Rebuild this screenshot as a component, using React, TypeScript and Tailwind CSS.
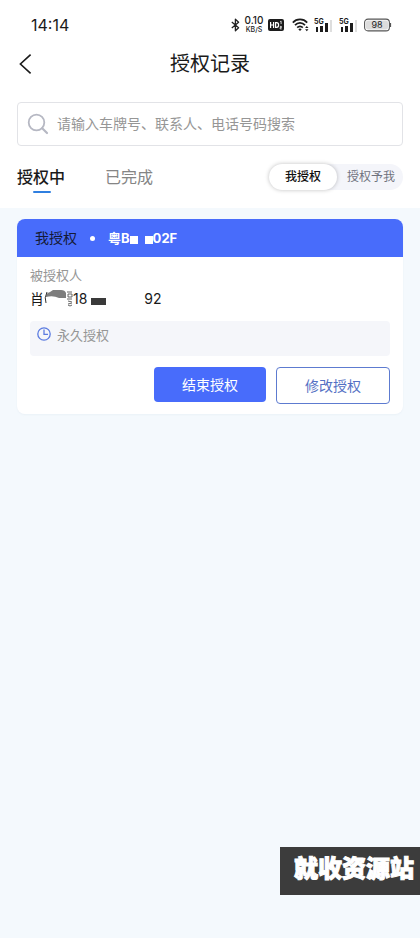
import React, { useState } from 'react';

const BluetoothIcon = () => (
  <svg width="9" height="14" viewBox="0 0 9 14" fill="none" stroke="#222" strokeWidth="1.3" strokeLinejoin="round">
    <path d="M0.8 4 L7.6 9.8 L4.4 12.8 V1.2 L7.6 4.2 L0.8 10" />
  </svg>
);

const HdIcon = () => (
  <svg width="16" height="12" viewBox="0 0 16 12">
    <rect width="16" height="12" rx="2" fill="#1c1c1c" />
    <path d="M2.6 3v6M5.6 3v6M2.6 6h3M7.6 3.6v4.8h1c1.4 0 2-1 2-2.4s-.6-2.4-2-2.4z" fill="none" stroke="#fff" strokeWidth="1.2" />
    <path d="M12.2 2.6l.9-.5v3M11.9 7.4h1.5v1.2h-1.3v1.3h1.6" fill="none" stroke="#fff" strokeWidth="0.8" />
  </svg>
);

const WifiIcon = () => (
  <svg width="18" height="14" viewBox="0 0 18 14" fill="none" stroke="#1c1c1c" strokeWidth="1.7">
    <path d="M0.8 4.6 C4.6 0.4 11.4 0.4 15.2 4.6" />
    <path d="M3 7.2 C5.8 4.2 10.2 4.2 13 7.2" />
    <path d="M5.2 9.6 C6.8 7.9 9.2 7.9 10.8 9.6" />
    <path d="M8 13 L6.3 11.2 Q8 9.8 9.7 11.2 Z" fill="#1c1c1c" stroke="none" />
    <path d="M14.8 8 l1.7 2 h-3.4z M14.8 13.2 l1.7 -2 h-3.4z" fill="#1c1c1c" stroke="none" />
  </svg>
);

const SignalIcon = () => (
  <svg width="19" height="15" viewBox="0 0 19 15">
    <text x="0" y="6" fontSize="7" fontWeight="700" fontFamily="Inter, sans-serif" fill="#1c1c1c">5G</text>
    <rect x="2" y="9" width="2" height="5" fill="#1c1c1c" />
    <rect x="6" y="8" width="3" height="6" fill="#1c1c1c" />
    <rect x="11" y="5" width="3" height="9" fill="#1c1c1c" />
    <rect x="16" y="2" width="2" height="12" fill="#dedede" />
  </svg>
);

const BatteryIcon = () => (
  <svg width="28" height="14" viewBox="0 0 28 14">
    <rect x="0.6" y="1.1" width="24.8" height="11.8" rx="3.4" fill="#fff" stroke="#555" strokeWidth="1.1" />
    <rect x="2" y="2.5" width="22" height="9" rx="2" fill="#dcdcdc" />
    <path d="M26.4 5 v4" stroke="#555" strokeWidth="1.4" />
    <text x="13" y="10.4" textAnchor="middle" fontSize="9" fontFamily="Inter, sans-serif" fill="#222">98</text>
  </svg>
);

const StatusBar = () => (
  <div className="flex h-[46px] items-center pl-[31px] pr-7 pt-1">
    <span className="mr-auto text-base leading-5">14:14</span>
    <div className="flex items-center">
      <BluetoothIcon />
      <div className="ml-1 flex w-5 flex-col items-center text-[#222]">
        <span className="text-[10px] font-medium leading-[9px]">0.10</span>
        <span className="text-[7px] font-medium leading-[9px]">KB/S</span>
      </div>
      <div className="ml-1 flex items-center">
        <HdIcon />
      </div>
      <div className="ml-2 flex items-center gap-1">
        <WifiIcon />
        <div className="flex gap-1.5 pr-0.5">
          <SignalIcon />
          <SignalIcon />
        </div>
        <BatteryIcon />
      </div>
    </div>
  </div>
);

const App: React.FC = () => {
  const [tab, setTab] = useState('active');
  const [scope, setScope] = useState('mine');

  const tabClass = (id: string) =>
    tab === id ? 'relative text-base leading-6 font-medium text-[#1a1a1a]' : 'relative text-base leading-6 text-[#858585]';

  const scopeClass = (id: string) =>
    scope === id
      ? 'h-full rounded-full bg-white px-4 text-xs font-medium text-[#111] shadow-[0_0_4px_rgba(0,0,0,0.25)]'
      : 'h-full rounded-full pl-2.5 pr-2 text-xs text-[#70737e]';

  return (
    <div className="flex min-h-screen flex-col bg-[#f4f9fd] font-[Inter,'Noto_Sans_CJK_SC',sans-serif] text-[#1a1a1a]">
      <div className="bg-white">
        <StatusBar />

        {/* Title */}
        <header className="grid h-9 grid-cols-[1fr_auto_1fr] items-center px-[18px]">
          <button aria-label="返回" className="flex w-fit">
            <svg width="14" height="22" viewBox="0 0 14 22" fill="none" stroke="#1a1a1a" strokeWidth="1.6">
              <path d="M12.6 1.6 L2.4 11 L12.6 20.4" />
            </svg>
          </button>
          <h1 className="text-xl">授权记录</h1>
        </header>

        {/* Search */}
        <div className="px-[17px] pt-5">
          <label className="flex h-11 items-center gap-2 rounded border border-[#e2e3e7] pl-[9px] pr-3">
            <svg width="22" height="22" viewBox="0 0 22 22" fill="none" stroke="#b6b8c3" strokeWidth="1.8" strokeLinecap="round">
              <circle cx="9.5" cy="9.5" r="7.8" />
              <path d="M15.2 15.2 L20 20" strokeWidth="2.2" />
            </svg>
            <input
              type="text"
              aria-label="搜索"
              placeholder="请输入车牌号、联系人、电话号码搜索"
              className="min-w-0 flex-1 text-sm outline-none placeholder:text-[#969696]"
            />
          </label>
        </div>

        {/* Tabs */}
        <div className="flex h-[62px] items-center justify-between px-[17px]">
          <div className="flex gap-10">
            <button className={tabClass('active')} onClick={() => setTab('active')}>
              授权中
              {tab === 'active' && <span className="absolute -bottom-1 left-4 h-0.5 w-[18px] rounded-full bg-[#2f7fe0]" />}
            </button>
            <button className={tabClass('done')} onClick={() => setTab('done')}>
              已完成
              {tab === 'done' && <span className="absolute -bottom-1 left-4 h-0.5 w-[18px] rounded-full bg-[#2f7fe0]" />}
            </button>
          </div>
          <div className="flex h-[26px] rounded-full bg-[#f4f5fa]">
            <button className={scopeClass('mine')} onClick={() => setScope('mine')}>我授权</button>
            <button className={scopeClass('toMe')} onClick={() => setScope('toMe')}>授权予我</button>
          </div>
        </div>
      </div>

      {/* Record */}
      <main className="px-[17px] pt-[11px]">
        <section className="overflow-hidden rounded-lg bg-white pb-2.5 shadow-[0_1px_2px_rgba(200,215,225,0.2)]">
          <div className="flex h-[38px] items-center bg-[#486cfb] pl-[18px] text-sm">
            <span className="text-[#151a35]">我授权</span>
            <span className="mx-[13px] size-[5px] rounded-full bg-white" />
            <span className="flex items-center text-[13px] font-bold text-white">
              粤B
              <span className="mr-[7px] mt-1 size-2 bg-white" />
              <span className="mt-1 size-2 bg-white" />
              02F
            </span>
          </div>

          <div className="px-[13px] pt-2">
            <p className="text-[13px] leading-5 text-[#969696]">被授权人</p>
            <p className="flex h-7 items-center text-sm leading-5">
              肖
              <svg width="29" height="20" viewBox="0 0 29 20">
                <path d="M2 8 Q2 4 6 3 L9 1 H17 Q21 1 22 4 V9 H15 Q9 6 2 8 Z" fill="#7d7d7d" />
                <path d="M3 3 Q0 9 2 14" fill="none" stroke="#333" />
                <path d="M23 3 h5 M24 5 h4 v3 h-4 z M23 10 h5 M24 12 l4 1 M24 15 l4 -1 M24 16 q2 2 4 0" fill="none" stroke="#555" strokeWidth="0.9" />
              </svg>
              18
              <span className="ml-1 mt-1 mr-[38px] h-[7px] w-[15px] bg-[#3a3a3a]" />
              92
            </p>
            <div className="mt-2 flex h-[35px] items-start gap-1.5 rounded-sm bg-[#f5f6fa] px-[7px] pt-1">
              <svg className="mt-0.5" width="14" height="14" viewBox="0 0 14 14" fill="none" stroke="#5b7be0" strokeWidth="1.3">
                <circle cx="7" cy="7" r="6.2" />
                <path d="M7 2.4 V7.3 H11" />
              </svg>
              <span className="text-[13px] leading-5 text-[#969696]">永久授权</span>
            </div>
            <div className="mt-[11px] flex items-start justify-end gap-2.5">
              <button className="h-[35px] w-28 rounded-sm bg-[#486cfb] text-sm text-white">结束授权</button>
              <button className="h-[37px] w-[114px] rounded border border-[#5d7bd0] text-sm text-[#5571c4]">修改授权</button>
            </div>
          </div>
        </section>
      </main>

      <div className="fixed bottom-[43px] right-0 flex h-12 items-center bg-[#3c3c3c] pb-1 pl-[14px] pr-[6px] text-2xl font-black leading-8 text-white [-webkit-text-stroke:1px_white]">
        就收资源站
      </div>
    </div>
  );
};

export default App;
